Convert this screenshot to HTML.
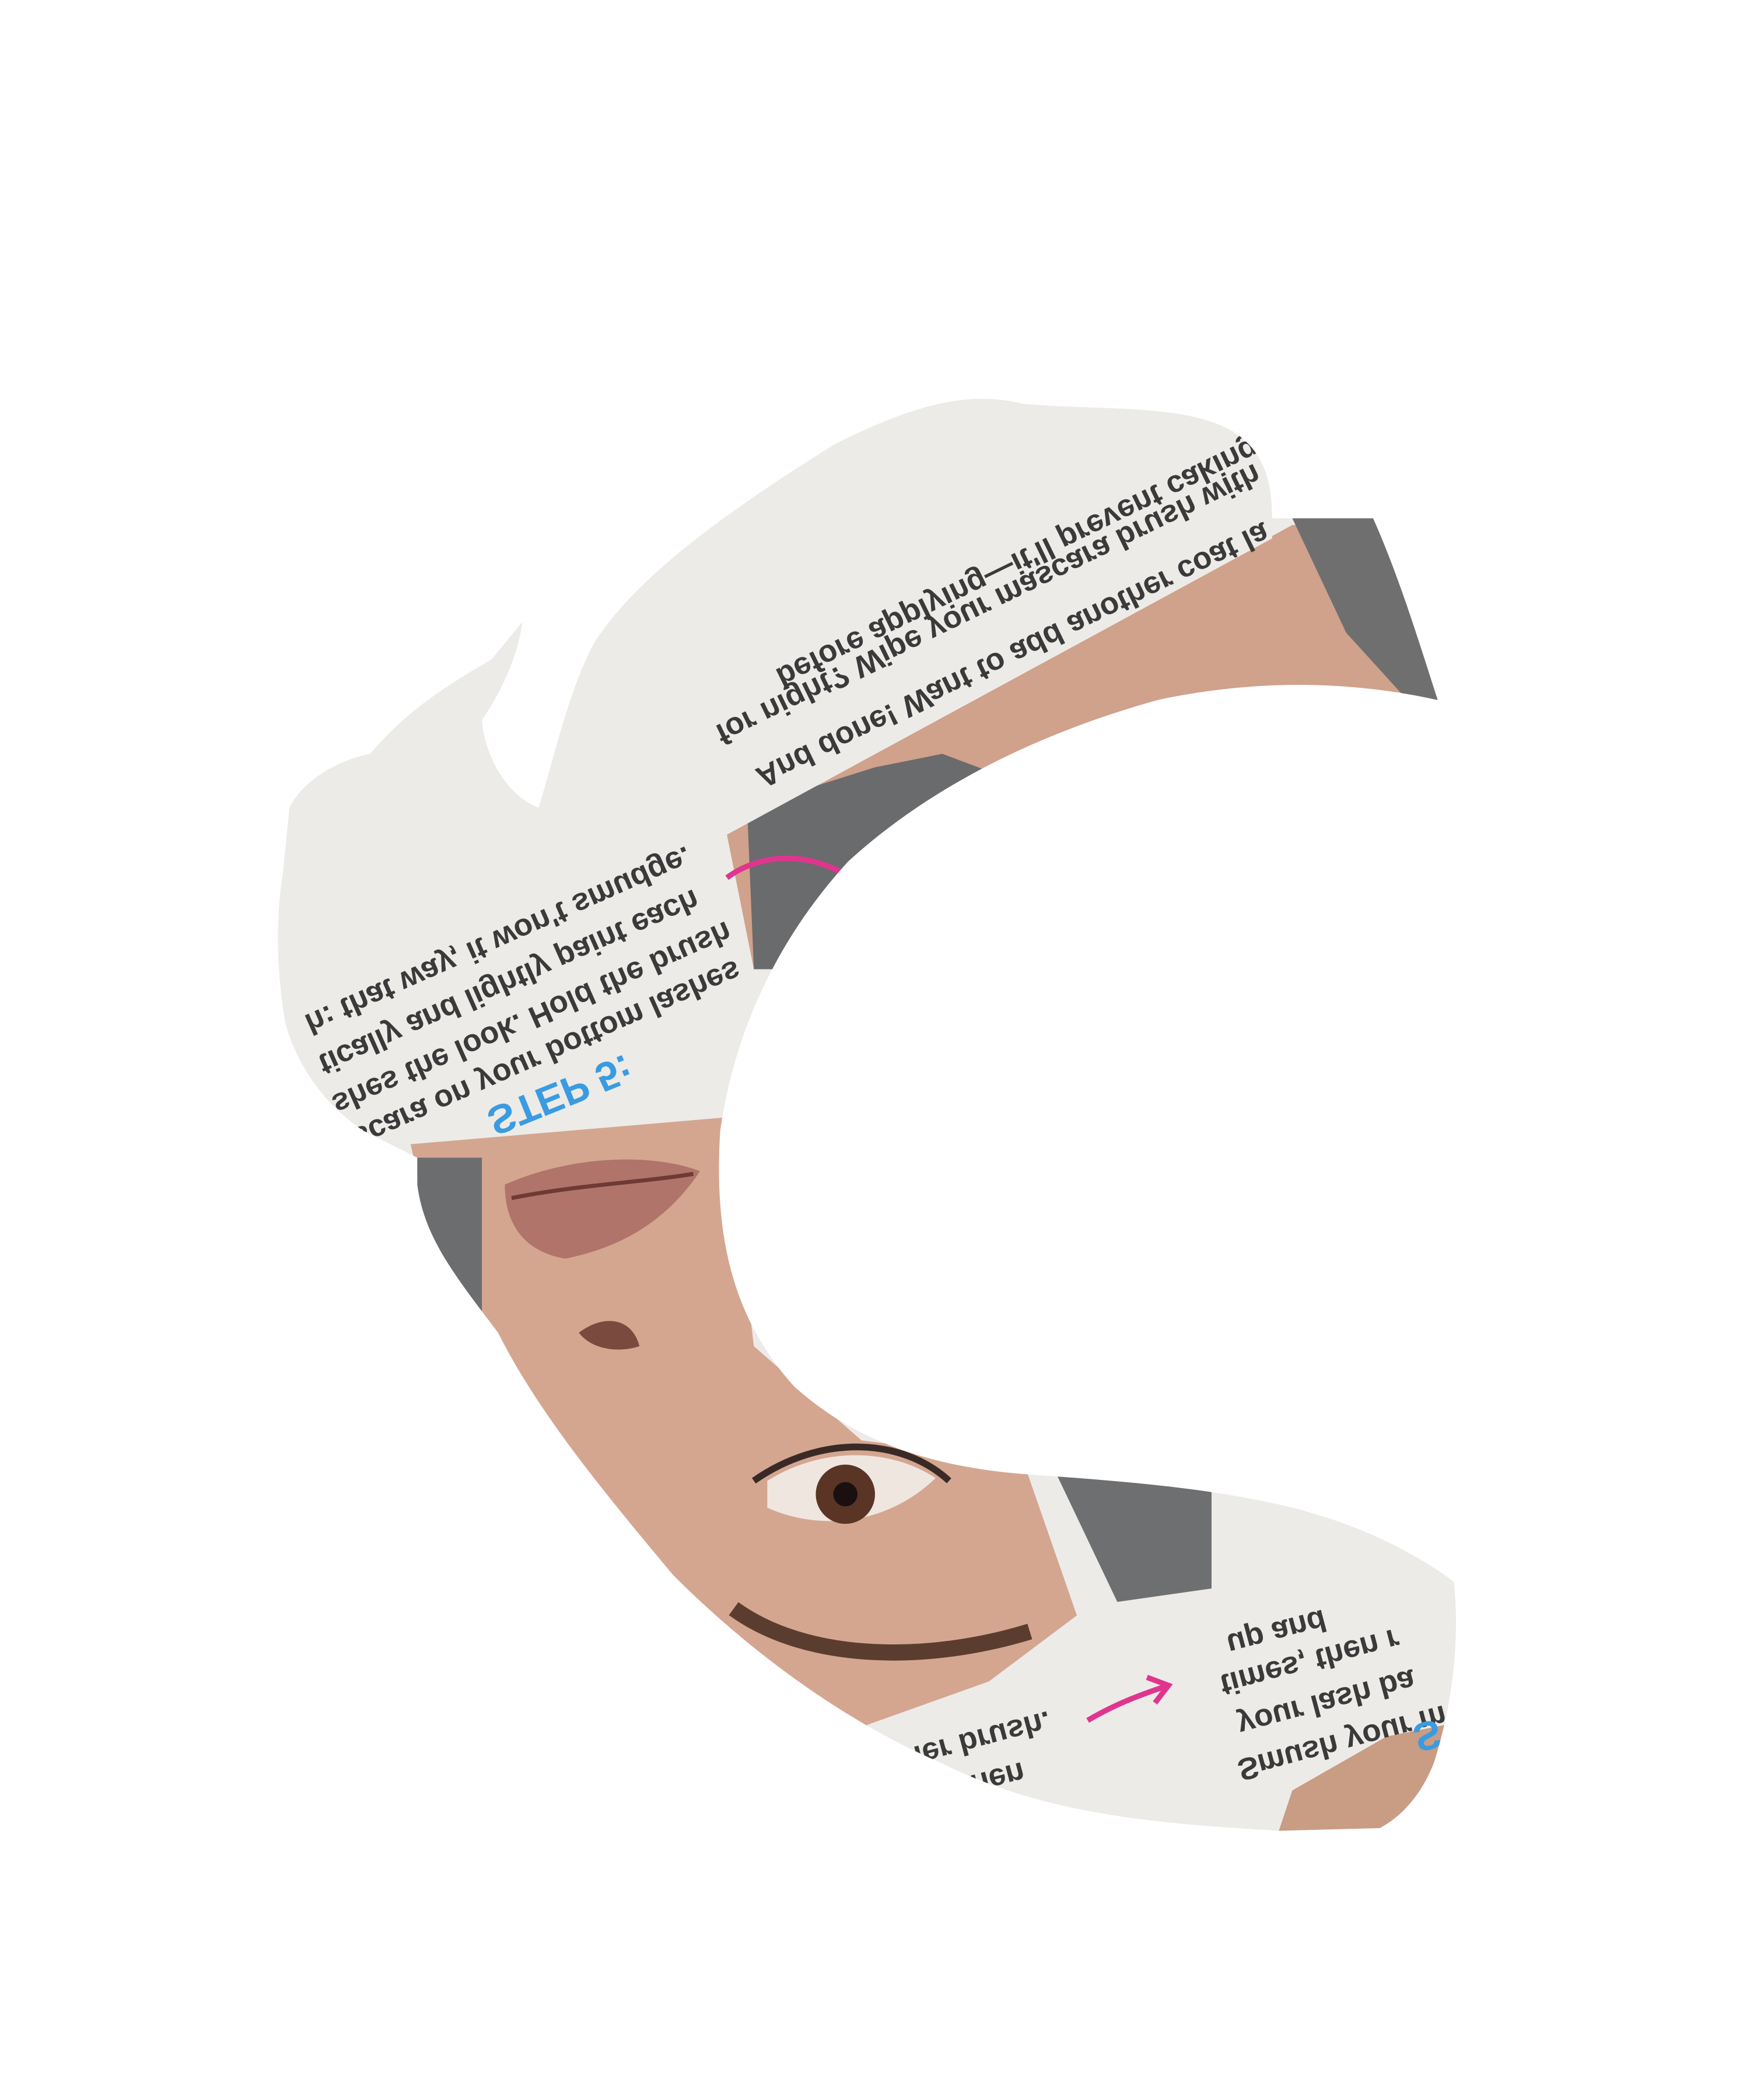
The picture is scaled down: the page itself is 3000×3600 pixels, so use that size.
<!DOCTYPE html>
<html><head><meta charset="utf-8"><style>
html,body{margin:0;padding:0;background:#fff;width:3000px;height:3600px;overflow:hidden}
svg{display:block}
text{font-family:"Liberation Sans",sans-serif;fill:#3a3a3a}
</style></head><body>
<svg width="3000" height="3600" viewBox="0 0 1300 1560" xmlns="http://www.w3.org/2000/svg">
<defs>
<clipPath id="c">
<path d="M215,600 C225,580 250,565 275,560 C300,530 330,510 365,490 L388,462 C385,485 375,510 358,535 C360,560 375,590 400,600 C410,570 420,520 440,480 C470,430 540,380 620,330 C680,300 720,290 760,300 C820,305 880,300 915,320 C940,335 945,360 945,385 L1020,385 C1040,430 1055,480 1068,520 C1000,505 930,505 860,520 C770,545 690,585 630,640 C575,700 545,770 535,840 C530,920 545,980 590,1030 C640,1075 700,1090 760,1095 C830,1100 900,1105 960,1120 C1020,1135 1060,1160 1080,1175 C1085,1220 1078,1270 1065,1310 C1055,1335 1040,1350 1025,1358 L950,1360 C870,1355 780,1350 700,1310 C630,1280 560,1230 500,1170 C450,1110 400,1050 370,990 C340,950 315,920 310,880 L310,860 L270,840 C240,820 220,790 212,760 C205,720 205,680 210,650 Z"/>
</clipPath>
</defs>
<rect width="1300" height="1560" fill="#fff"/>
<g clip-path="url(#c)">
<rect width="1300" height="1560" fill="#ecebe8"/>
<polygon points="540,620 960,390 1070,390 1070,540 900,560 650,660 600,720 560,720" fill="#d0a18b"/>
<polygon points="960,385 1070,385 1070,530 1050,525 1000,470" fill="#6f6f70"/>
<polygon points="555,600 650,570 700,560 740,575 700,620 640,680 600,720 560,720" fill="#6a6b6c"/>
<polygon points="540,620 945,400 945,380 540,595" fill="#ecebe8"/>
<polygon points="305,850 540,830 560,1000 640,1070 760,1085 800,1200 720,1260 620,1290 480,1200 380,1060 330,960" fill="#d4a690"/>
<polygon points="300,860 358,860 358,1010 320,960" fill="#6c6d6e"/>
<polygon points="780,1085 900,1100 900,1180 830,1190" fill="#6e6f70"/>
<polygon points="760,1085 830,1190 820,1200 800,1200" fill="#ecebe8"/>
<polygon points="620,1290 760,1240 900,1180 1080,1160 1080,1360 620,1360" fill="#ecebe8"/>
<polygon points="960,1330 1030,1290 1080,1280 1080,1360 950,1360" fill="#c99c84"/>
<path d="M375,880 C420,860 480,855 520,870 C500,900 470,925 420,935 C390,930 375,910 375,880 Z" fill="#b0746a"/>
<path d="M380,890 C430,880 480,878 515,872" stroke="#6e3a34" stroke-width="3" fill="none"/>
<path d="M430,990 C450,975 470,980 475,1000 C460,1005 440,1003 430,990 Z" fill="#7a4a3e"/>
<path d="M570,1100 C610,1075 660,1075 695,1098 C660,1132 610,1138 570,1120 Z" fill="#efe6e0"/>
<circle cx="628" cy="1110" r="22" fill="#5a3526"/>
<circle cx="628" cy="1110" r="9" fill="#1a1010"/>
<path d="M560,1100 C610,1065 670,1068 705,1100" stroke="#3a2a26" stroke-width="5" fill="none"/>
<path d="M545,1195 C600,1235 690,1235 765,1212" stroke="#5b3d30" stroke-width="12" fill="none"/>
<ellipse cx="460" cy="1160" rx="25" ry="12" fill="#b7c4c0"/>
<g font-size="23" font-weight="bold">
<text transform="translate(575,498) rotate(-26) scale(1,-1)">before applying—it'll prevent caking</text>
<text transform="translate(530,540) rotate(-26) scale(1,-1)">for night? Wipe your mascara brush with</text>
<text transform="translate(560,572) rotate(-26) scale(1,-1)">And done! Want to add another coat la</text>
<text transform="translate(225,755) rotate(-24) scale(1,-1)">h: that way, it won't smudge.</text>
<text transform="translate(235,785) rotate(-24) scale(1,-1)">tically and lightly paint each</text>
<text transform="translate(245,815) rotate(-24) scale(1,-1)">shes the look. Hold the brush</text>
<text transform="translate(260,840) rotate(-24) scale(1,-1)">scara on your bottom lashes</text>
<text transform="translate(918,1308) rotate(-15) scale(1,-1)">Smush your m</text>
<text transform="translate(918,1275) rotate(-15) scale(1,-1)">your lash ba</text>
<text transform="translate(905,1245) rotate(-15) scale(1,-1)">times, then r</text>
<text transform="translate(910,1215) rotate(-15) scale(1,-1)">up and</text>
<text transform="translate(670,1300) rotate(-15) scale(1,-1)">ner brush.</text>
<text transform="translate(680,1330) rotate(-15) scale(1,-1)">g. Then</text>
<text transform="translate(700,1355) rotate(-15) scale(1,-1)">ying</text>
</g>
<text transform="translate(360,825) rotate(-22) scale(1,-1)" font-size="30" font-weight="bold" style="fill:#3b9be0">STEP 5:</text>
<text transform="translate(1048,1282) rotate(-15) scale(1,-1)" font-size="30" font-weight="bold" style="fill:#3b9be0">ST</text>
<path d="M540,652 C570,630 610,635 635,655" stroke="#e0358f" stroke-width="4" fill="none"/>
<path d="M620,645 L635,656 L618,662" stroke="#e0358f" stroke-width="4" fill="none"/>
<path d="M808,1278 C830,1265 850,1258 868,1252" stroke="#e0358f" stroke-width="4" fill="none"/>
<path d="M852,1246 L868,1252 L858,1265" stroke="#e0358f" stroke-width="4" fill="none"/>
</g>
</svg>
</body></html>
